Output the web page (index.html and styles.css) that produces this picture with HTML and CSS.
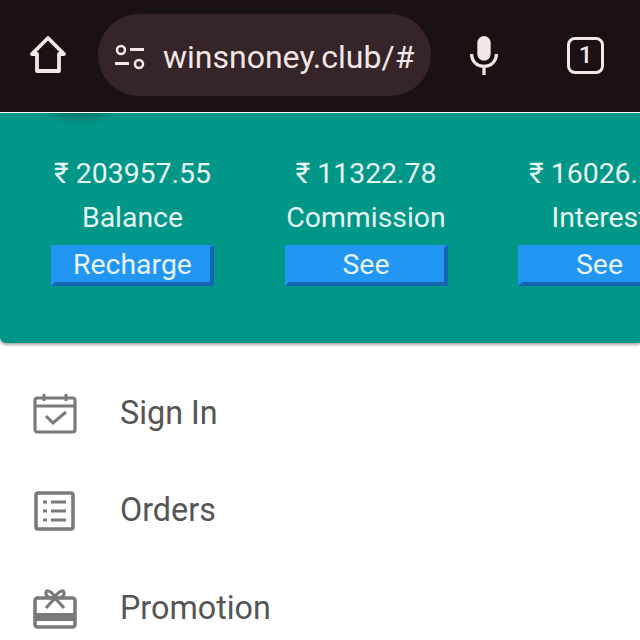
FILE: index.html
```html
<!DOCTYPE html>
<html lang="en">
<head>
    <meta charset="UTF-8">
    <title>winsnoney</title>
    <link rel="stylesheet" href="styles.css">
</head>
<body>
<!-- browser toolbar -->
<header class="toolbar">
    <svg class="home" width="40" height="40" viewBox="0 0 40 40">
        <path d="M20 3 L36 19 H31 V36 H9 V19 H4 Z" fill="none" stroke="#f3e6e6" stroke-width="3.8" stroke-linejoin="round"/>
    </svg>
    <div class="urlbar">
        <svg class="tune" width="32" height="28" viewBox="0 0 32 28">
            <circle cx="7" cy="7" r="4" fill="none" stroke="#f3e6e6" stroke-width="2.6"/>
            <path d="M16 6.5 H30 M1 20.5 H15" stroke="#f3e6e6" stroke-width="3"/>
            <circle cx="25" cy="21" r="4" fill="none" stroke="#f3e6e6" stroke-width="2.6"/>
        </svg>
        <span class="url">winsnoney.club/#</span>
    </div>
    <svg class="mic" width="32" height="40" viewBox="0 0 32 42">
        <rect x="9" y="1" width="14" height="26" rx="7" fill="#f3e6e6"/>
        <path d="M3 20 C3 28 9 33 16 33 C23 33 29 28 29 20 M16 33 V42" fill="none" stroke="#f3e6e6" stroke-width="3.4"/>
    </svg>
    <div class="tabs">1</div>
</header>

<!-- account card -->
<section class="card">
    <div class="smudge"></div>
    <div class="stat">
        <div class="amount">₹ 203957.55</div>
        <div class="label">Balance</div>
        <div class="btn">Recharge</div>
    </div>
    <div class="stat">
        <div class="amount">₹ 11322.78</div>
        <div class="label">Commission</div>
        <div class="btn">See</div>
    </div>
    <div class="stat">
        <div class="amount">₹ 16026.55</div>
        <div class="label">Interest</div>
        <div class="btn">See</div>
    </div>
</section>

<!-- menu -->
<ul class="menu">
    <li>
        <svg width="44" height="40" viewBox="0 0 44 40">
            <rect x="2" y="4" width="40" height="34" rx="2.5" fill="none" stroke="#7a7a7a" stroke-width="3.2"/>
            <path d="M2 12 H42 M11 0 V7 M33 0 V7" stroke="#7a7a7a" stroke-width="3" fill="none"/>
            <path d="M13 22 L20 29 L33 18" stroke="#7a7a7a" stroke-width="3" fill="none"/>
        </svg>
        <span>Sign In</span>
    </li>
    <li>
        <svg width="44" height="40" viewBox="0 0 44 40">
            <rect x="3" y="2" width="37" height="36" rx="2" fill="none" stroke="#7a7a7a" stroke-width="3.6"/>
            <path d="M10 11 H14 M18 11 H33 M10 20 H14 M18 20 H33 M10 29 H14 M18 29 H33" stroke="#7a7a7a" stroke-width="3"/>
        </svg>
        <span>Orders</span>
    </li>
    <li>
        <svg width="44" height="40" viewBox="0 0 44 40">
            <rect x="2" y="9" width="40" height="29" rx="2.5" fill="none" stroke="#7a7a7a" stroke-width="3.6"/>
            <path d="M2 24 H42 V32 H2 Z" fill="#7a7a7a"/>
            <path d="M22 8 C17 0 12 1 13 5 C13 8 18 9 22 9 C26 9 31 8 31 5 C32 1 27 0 22 8 Z M22 9 L13 19 M22 9 L31 19" fill="none" stroke="#7a7a7a" stroke-width="3.2"/>
        </svg>
        <span>Promotion</span>
    </li>
</ul>
</body>
</html>
```

FILE: styles.css
```css
*{
    margin: 0;
    padding: 0;
    list-style: none;
    box-sizing: border-box;
}
html,body{
    width: 640px;
    height: 640px;
    overflow: hidden;
    background-color: #fff;
    font-family: Roboto, "Liberation Sans", sans-serif;
}
.toolbar{
    height: 112px;
    background-color: #1a1113;
    display: flex;
    align-items: center;
    padding: 0 0 2px 28px;
}
.home{
    flex: none;
    margin-right: 30px;
}
.urlbar{
    flex: none;
    width: 333px;
    height: 82px;
    border-radius: 41px;
    background-color: #362528;
    display: flex;
    align-items: center;
    gap: 17px;
    padding-left: 16px;
    overflow: hidden;
}
.tune{
    flex: none;
    margin-top: 3px;
}
.url{
    color: #f3e6e6;
    font-size: 32px;
    padding-top: 4px;
    white-space: nowrap;
}
.mic{
    flex: none;
    margin: 0 0 0 37px;
}
.tabs{
    flex: none;
    margin-left: 67px;
    width: 37px;
    height: 37px;
    border: 3.5px solid #f3e6e6;
    border-radius: 8px;
    color: #f3e6e6;
    font-size: 24px;
    font-weight: 500;
    display: flex;
    align-items: center;
    justify-content: center;
}
.card{
    position: relative;
    height: 230px;
    margin-top: 1px;
    background-color: #009688;
    border-radius: 0 0 0 6px;
    box-shadow: 0 2px 3px rgba(0,0,0,.35);
    display: flex;
    gap: 70.5px;
    padding: 40px 0 0 51px;
    clip-path: inset(0 0 -8px 0);
}
.smudge{
    position: absolute;
    left: 52px;
    top: -8px;
    width: 56px;
    height: 12px;
    border-radius: 50%;
    background-color: rgba(20,50,45,.4);
    filter: blur(5px);
}
.stat{
    flex: none;
    width: 163px;
    color: #e6f7f4;
    text-align: center;
}
.amount{
    display: flex;
    justify-content: center;
    font-size: 28.4px;
    line-height: 42px;
    white-space: nowrap;
}
.label{
    font-size: 28.4px;
    line-height: 45px;
    white-space: nowrap;
}
.btn{
    margin-top: 5px;
    height: 41px;
    background-color: #2196f3;
    border: 4px solid #2196f3;
    border-top-width: 2px;
    border-right-color: #1565b0;
    border-bottom-color: #1565b0;
    color: #e8f4fd;
    font-size: 28.4px;
    line-height: 36px;
    white-space: nowrap;
}
.menu{
    padding: 22px 0 0 33px;
}
.menu li{
    height: 97.5px;
    display: flex;
    align-items: center;
    gap: 43px;
    color: #555;
    font-size: 32.3px;
}
.menu svg{
    flex: none;
}
.menu span{
    padding-bottom: 2px;
}
```
